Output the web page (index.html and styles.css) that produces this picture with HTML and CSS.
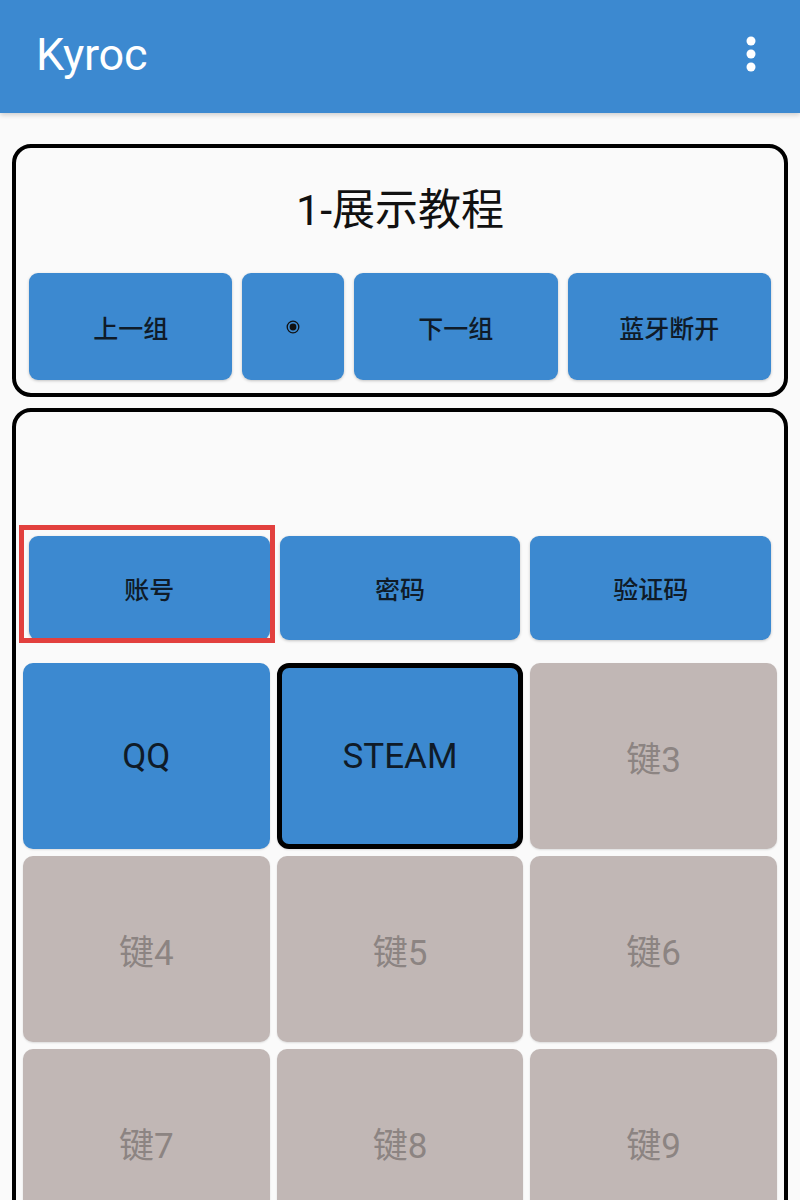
FILE: index.html
```html
<!DOCTYPE html>
<html lang="zh-CN">
<head>
    <meta charset="UTF-8">
    <meta name="viewport" content="width=device-width, initial-scale=1.0">
    <title>Kyroc</title>
    <link rel="stylesheet" href="styles.css">
</head>
<body>
    <header class="app-bar">
        <h1 class="app-title">Kyroc</h1>
        <button class="menu-btn" aria-label="更多">
            <svg width="12" height="40" viewBox="0 0 12 40">
                <circle cx="6" cy="7" r="4.5" fill="#fff"/>
                <circle cx="6" cy="20" r="4.5" fill="#fff"/>
                <circle cx="6" cy="33" r="4.5" fill="#fff"/>
            </svg>
        </button>
    </header>

    <main class="content">
        <section class="card group-card">
            <h2 class="group-title">1-展示教程</h2>
            <div class="group-actions">
                <button class="btn wide">上一组</button>
                <button class="btn narrow" aria-label="当前组">
                    <svg width="14" height="14" viewBox="0 0 14 14">
                        <circle cx="7" cy="7" r="5.8" fill="none" stroke="#111" stroke-width="1.3"/>
                        <circle cx="7" cy="7" r="3.4" fill="#111"/>
                    </svg>
                </button>
                <button class="btn wide">下一组</button>
                <button class="btn wide">蓝牙断开</button>
            </div>
        </section>

        <section class="card keys-card">
            <div class="keys-spacer"></div>
            <div class="field-row">
                <div class="field selected"><button class="btn">账号</button></div>
                <div class="field"><button class="btn">密码</button></div>
                <div class="field"><button class="btn">验证码</button></div>
            </div>
            <div class="key-grid" id="keyGrid"></div>
        </section>
    </main>

    <script>
        const keys = [
            {label: 'QQ', set: true},
            {label: 'STEAM', set: true, active: true},
            {label: '键3'},
            {label: '键4'},
            {label: '键5'},
            {label: '键6'},
            {label: '键7'},
            {label: '键8'},
            {label: '键9'}
        ];

        function renderKeys() {
            const grid = document.getElementById('keyGrid');
            keys.forEach(key => {
                const div = document.createElement('div');
                div.className = 'key';
                if (key.set) div.classList.add('set');
                if (key.active) div.classList.add('active');
                div.textContent = key.label;
                grid.appendChild(div);
            });
        }

        renderKeys();
    </script>
</body>
</html>
```

FILE: styles.css
```css
body {
    margin: 0;
    padding: 0;
    font-family: 'Roboto', 'Noto Sans CJK SC', sans-serif;
    background-color: #fafafa;
    color: #111;
}
.app-bar {
    height: 113px;
    background-color: #3c89d0;
    display: flex;
    align-items: center;
    justify-content: space-between;
    padding: 0 43px 0 36px;
    box-shadow: 0 2px 5px rgba(0, 0, 0, 0.18);
    position: relative;
    z-index: 1;
}
.app-title {
    margin: 0;
    font-size: 45px;
    font-weight: 400;
    color: #fff;
    letter-spacing: -0.3px;
    padding-bottom: 4px;
}
.menu-btn {
    background: none;
    border: none;
    padding: 0;
    display: flex;
    margin-top: -6px;
}
.content {
    padding: 31px 12px 0;
    display: flex;
    flex-direction: column;
    gap: 11px;
}
.card {
    border: 4px solid #000;
    border-radius: 19px;
    background-color: #fafafa;
}
.group-card {
    padding: 33px 13px 13px;
}
.group-title {
    margin: 0 0 34px;
    text-align: center;
    font-size: 43px;
    font-weight: 400;
    line-height: 58px;
    color: #111;
}
.group-actions {
    display: flex;
    gap: 10px;
}
.btn {
    font-family: 'Roboto', 'Noto Sans CJK SC', sans-serif;
    font-size: 25px;
    font-weight: 500;
    color: #0f1b28;
    background-color: #3c89d0;
    border: none;
    border-radius: 9px;
    height: 107px;
    box-shadow: 0 1px 3px rgba(0, 0, 0, 0.22);
    display: flex;
    align-items: center;
    justify-content: center;
    padding: 0;
}
.btn.wide {
    flex: 2;
}
.btn.narrow {
    flex: 1;
}
.keys-card {
    padding: 0 7px 7px;
}
.keys-spacer {
    height: 124px;
}
.field-row {
    display: grid;
    grid-template-columns: repeat(3, 1fr);
    gap: 10px;
    margin: 0 6px 23px;
}
.field {
    position: relative;
}
.field .btn {
    width: 100%;
    height: 104px;
}
.field.selected::after {
    content: '';
    position: absolute;
    left: -10px;
    right: -5px;
    top: -11px;
    bottom: -3px;
    border: 5px solid #e2403e;
    pointer-events: none;
}
.key-grid {
    display: grid;
    grid-template-columns: repeat(3, 1fr);
    gap: 7px;
}
.key {
    height: 186px;
    box-sizing: border-box;
    border-radius: 10px;
    background-color: #c1b7b5;
    color: #8c8482;
    font-size: 35px;
    display: flex;
    align-items: center;
    justify-content: center;
    box-shadow: 0 1px 2px rgba(0, 0, 0, 0.12);
}
.key.set {
    background-color: #3c89d0;
    color: #0f1b28;
}
.key.active {
    border: 5px solid #000;
    border-radius: 12px;
}
```
